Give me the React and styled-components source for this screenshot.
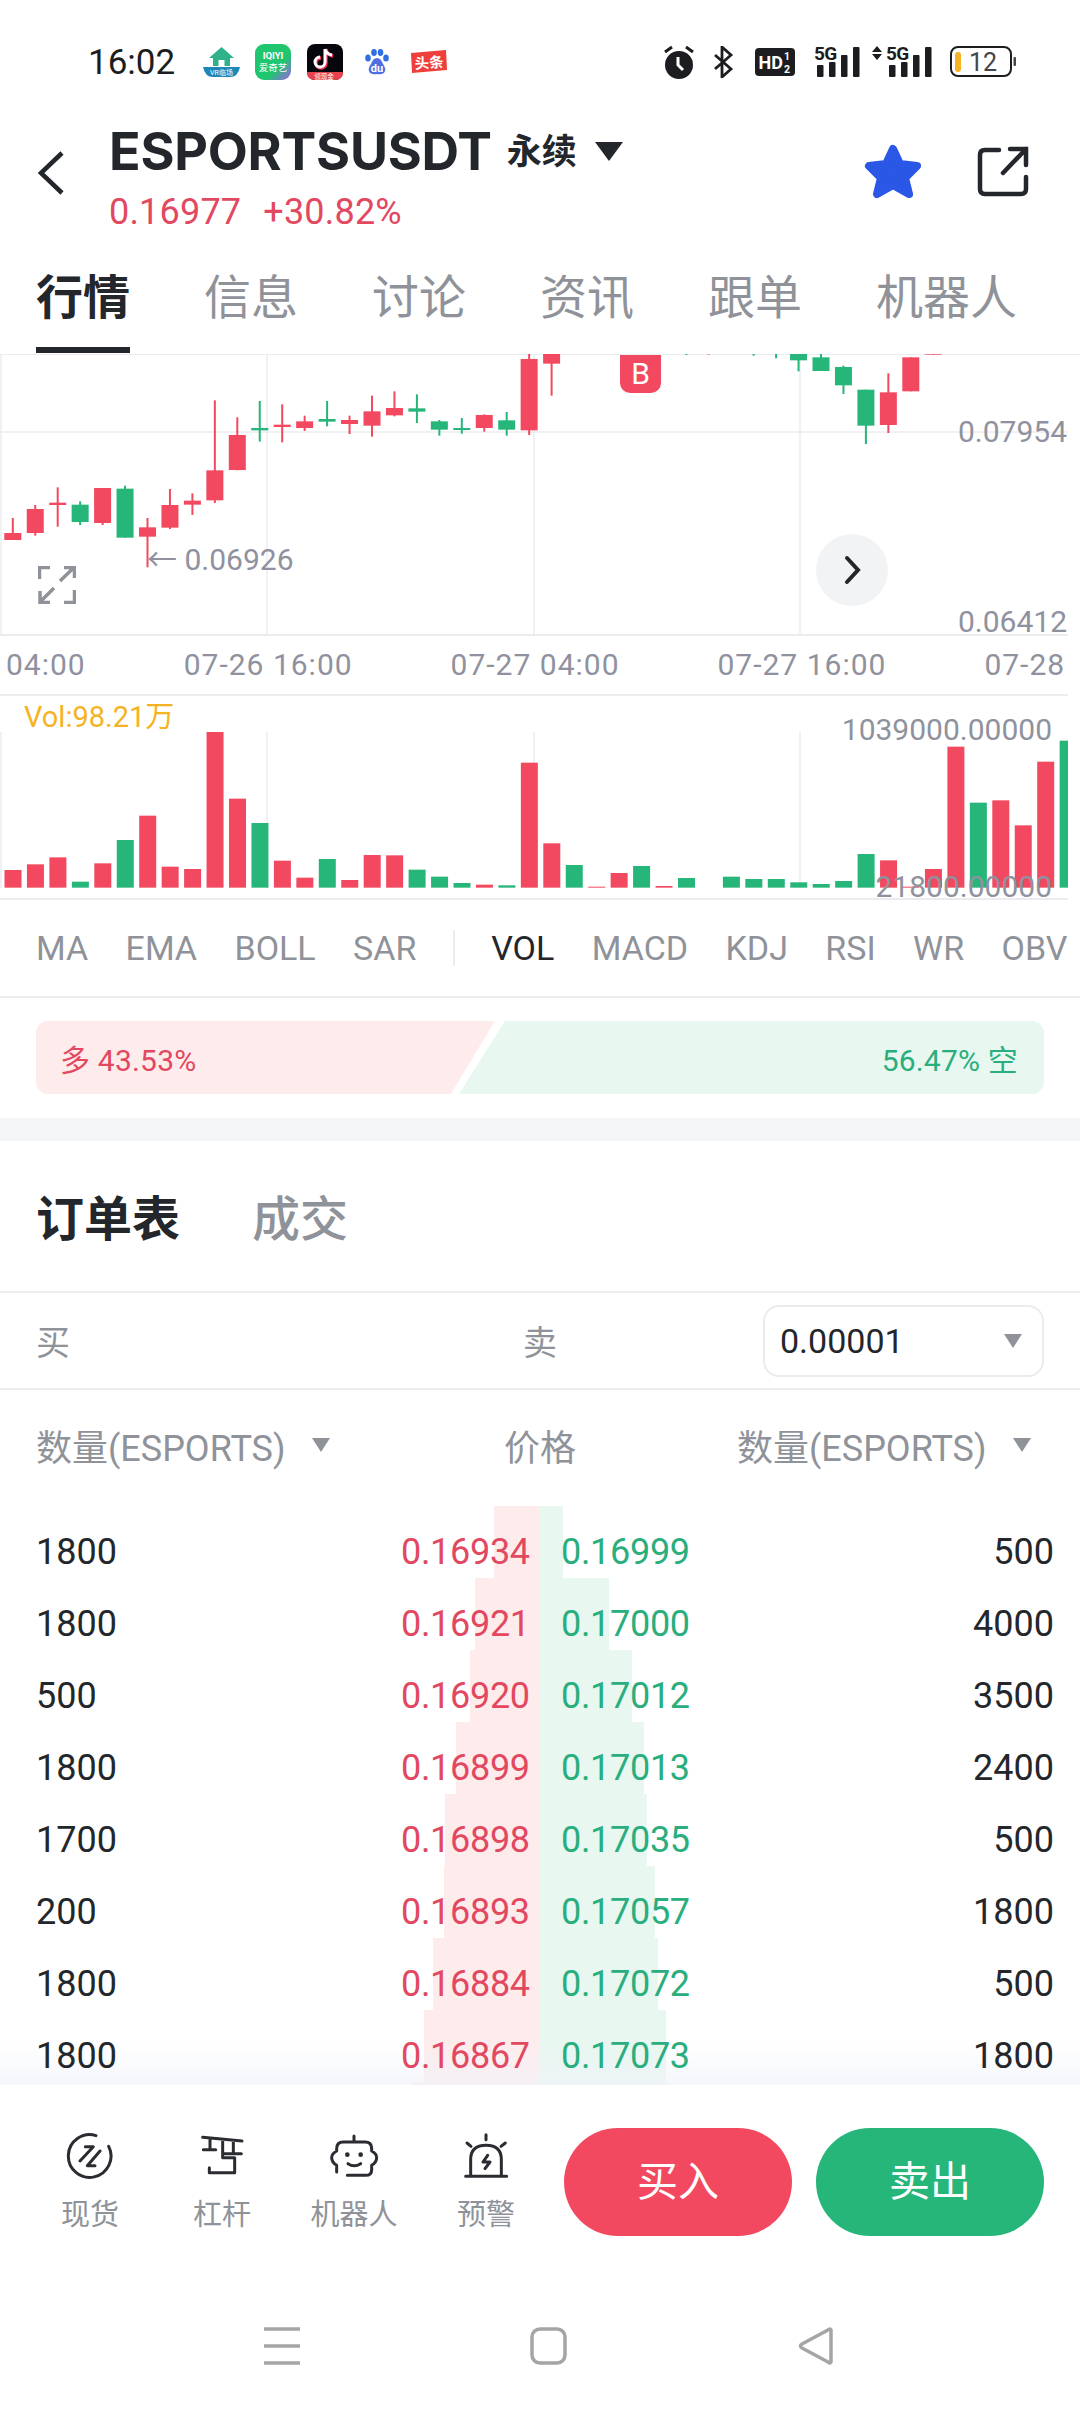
import React from 'react';
import styled, { createGlobalStyle } from 'styled-components';

const RED = '#f34960';
const GREEN = '#26b67a';
const RED_TEXT = '#e2485f';
const GREEN_TEXT = '#2aae7d';
const DARK = '#23262b';
const GREY = '#8f9399';
const AXIS = '#8f929e';
const LINE = '#ebecef';

const GlobalStyle = createGlobalStyle`
  html, body {
    margin: 0;
    padding: 0;
    background: #fff;
  }
  body {
    font-family: Roboto, "Noto Sans CJK SC", sans-serif;
    color: ${DARK};
  }
`;

const Page = styled.div`
  width: 1080px;
  height: 2412px;
  overflow: hidden;
  background: #fff;
`;

/* status bar */
const StatusBar = styled.div`
  display: flex;
  align-items: center;
  height: 124px;
  padding: 0 64px 0 88px;
  box-sizing: border-box;
`;
const Clock = styled.span`
  font-size: 35px;
  width: 88px;
  color: #1c1d20;
`;
const StatusIcon = styled.svg`
  flex: none;
  display: block;
  margin-left: ${(p) => p.$ml || 0}px;
`;
const StatusRight = styled.div`
  display: flex;
  align-items: center;
  margin-left: auto;
`;

/* header */
const Header = styled.div`
  display: flex;
  align-items: flex-start;
  height: 126px;
  padding: 0 51px 0 37px;
  box-sizing: border-box;
`;
const HeaderIcon = styled.svg`
  flex: none;
  display: block;
  margin-top: ${(p) => p.$mt}px;
`;
const TitleBlock = styled.div`
  margin-left: 44px;
`;
const TitleRow = styled.div`
  display: flex;
  align-items: center;
  height: 54px;
`;
const Symbol = styled.span`
  font-family: Inter, sans-serif;
  font-size: 52px;
  font-weight: 700;
  letter-spacing: -0.2px;
  color: ${DARK};
`;
const Perp = styled.span`
  font-size: 35px;
  font-weight: 700;
  margin-left: 15px;
  margin-top: -6px;
  color: ${DARK};
`;
const PerpCaret = styled.i`
  width: 0;
  height: 0;
  margin: 0 0 0 18px;
  border-left: 14px solid transparent;
  border-right: 14px solid transparent;
  border-top: 19px solid ${DARK};
`;
const PriceRow = styled.div`
  display: flex;
  gap: 22px;
  margin-top: 14px;
  font-size: 36px;
  line-height: 40px;
  letter-spacing: 0.2px;
  color: ${RED_TEXT};
`;
const HeaderActions = styled.div`
  display: flex;
  align-items: flex-start;
  gap: 55px;
  margin-left: auto;
`;

/* tabs */
const TabBar = styled.div`
  display: flex;
  gap: 74px;
  height: 104px;
  padding-left: 36px;
  box-sizing: border-box;
`;
const Tab = styled.div`
  position: relative;
  height: 104px;
  line-height: 96px;
  font-size: 47px;
  font-weight: ${(p) => (p.$active ? 700 : 400)};
  color: ${(p) => (p.$active ? DARK : GREY)};
  ${(p) =>
    p.$active &&
    `&::after {
      content: '';
      position: absolute;
      left: 0;
      right: 0;
      bottom: 1px;
      height: 6px;
      background: ${DARK};
    }`}
`;

/* price chart */
const ChartPanel = styled.div`
  position: relative;
  width: 1068px;
  height: 342px;
  box-sizing: border-box;
  border-bottom: 2px solid ${LINE};
`;
const TopRule = styled.div`
  height: 1px;
  margin-bottom: -1px;
  background: ${LINE};
  position: relative;
`;
const PriceSvg = styled.svg`
  display: block;
  width: 1068px;
  height: 282px;
`;
const ChartLabel = styled.span`
  position: absolute;
  top: ${(p) => p.$top}px;
  ${(p) => (p.$left !== undefined ? `left: ${p.$left}px;` : 'right: 1px;')}
  font-size: 30px;
  line-height: 36px;
  color: ${AXIS};
  white-space: nowrap;
`;
const SignalBadge = styled.div`
  position: absolute;
  top: 1px;
  left: 620px;
  width: 41px;
  height: 38px;
  border-radius: 0 0 10px 10px;
  background: ${RED};
  color: #fff;
  font-size: 30px;
  line-height: 38px;
  text-align: center;
`;
const ExpandIcon = styled.svg`
  position: absolute;
  left: 38px;
  top: 212px;
`;
const NextButton = styled.div`
  position: absolute;
  left: 816px;
  top: 180px;
  width: 72px;
  height: 72px;
  border-radius: 50%;
  background: #f2f3f5;
  display: flex;
  align-items: center;
  justify-content: center;
`;
const TimeAxis = styled.div`
  display: flex;
  gap: 98px;
  height: 58px;
  padding-left: 6px;
  line-height: 58px;
  font-size: 30px;
  letter-spacing: 1px;
  color: ${AXIS};
  white-space: nowrap;
`;

/* volume */
const VolumePanel = styled.div`
  position: relative;
  width: 1068px;
  height: 204px;
  padding-top: 36px;
  box-sizing: border-box;
  border-bottom: 2px solid ${LINE};
`;
const VolumeSvg = styled.svg`
  display: block;
  width: 1068px;
  height: 156px;
`;
const VolLabel = styled.span`
  position: absolute;
  left: 24px;
  top: 3px;
  font-size: 29px;
  line-height: 36px;
  color: #f5b324;
`;
const VolAxis = styled(ChartLabel)`
  right: 16px;
`;

/* indicators */
const IndicatorBar = styled.div`
  display: flex;
  align-items: center;
  gap: 37.4px;
  height: 98px;
  padding-left: 36px;
  box-sizing: border-box;
  border-bottom: 2px solid ${LINE};
  font-size: 34px;
  color: ${GREY};
  white-space: nowrap;
`;
const Indicator = styled.span`
  color: ${(p) => (p.$active ? DARK : GREY)};
`;
const IndicatorDivider = styled.i`
  flex: none;
  width: 2px;
  height: 36px;
  margin: 0 -1px;
  background: ${LINE};
`;

/* long short ratio */
const RatioSection = styled.div`
  display: flex;
  height: 120px;
  padding: 23px 36px 0;
  box-sizing: border-box;
`;
const RatioSide = styled.div`
  display: flex;
  align-items: center;
  height: 73px;
  box-sizing: border-box;
  font-size: 30px;
  letter-spacing: 0.2px;
`;
const RatioLong = styled(RatioSide)`
  flex: 0 0 459px;
  padding-left: 24px;
  background: #feeced;
  color: ${RED_TEXT};
  border-radius: 12px 0 0 12px;
  clip-path: polygon(0 0, 100% 0, 415px 100%, 0 100%);
`;
const RatioShort = styled(RatioSide)`
  flex: 1;
  margin-left: -36px;
  justify-content: flex-end;
  padding-right: 26px;
  background: #e8f7f0;
  color: ${GREEN_TEXT};
  border-radius: 0 12px 12px 0;
  clip-path: polygon(46px 0, 100% 0, 100% 100%, 0 100%);
`;
const Band = styled.div`
  height: 23px;
  background: #f4f5f7;
`;

/* order book */
const BookTabs = styled.div`
  display: flex;
  align-items: center;
  gap: 72px;
  height: 152px;
  padding: 0 0 2px 36px;
  box-sizing: border-box;
  border-bottom: 2px solid ${LINE};
  font-size: 48px;
`;
const BookTab = styled.span`
  font-weight: ${(p) => (p.$active ? 700 : 500)};
  color: ${(p) => (p.$active ? DARK : GREY)};
`;
const SideRow = styled.div`
  display: flex;
  align-items: center;
  height: 97px;
  padding: 0 36px 0 36px;
  box-sizing: border-box;
  border-bottom: 2px solid ${LINE};
  font-size: 34px;
  color: ${GREY};
`;
const SideLabel = styled.span`
  width: 487px;
`;
const Select = styled.div`
  display: flex;
  align-items: center;
  justify-content: space-between;
  width: 281px;
  height: 72px;
  margin-left: auto;
  padding: 0 20px 0 15px;
  box-sizing: border-box;
  border: 2px solid #e9ebee;
  border-radius: 16px;
  font-size: 34px;
  color: ${DARK};
`;
const Caret = styled.i`
  flex: none;
  width: 0;
  height: 0;
  border-left: 9px solid transparent;
  border-right: 9px solid transparent;
  border-top: 14px solid ${GREY};
`;
const ColumnHead = styled.div`
  display: grid;
  grid-template-columns: 468px 233px 1fr;
  align-items: center;
  height: 116px;
  padding: 0 0 6px 36px;
  box-sizing: border-box;
  font-size: 36px;
  color: ${GREY};
`;
const ColumnLabel = styled.span`
  display: flex;
  align-items: center;
  gap: 26px;
`;
const BookList = styled.div`
  position: relative;
  height: 579px;
  overflow: hidden;
  &::after {
    content: '';
    position: absolute;
    left: 0;
    right: 0;
    bottom: 0;
    height: 44px;
    background: linear-gradient(rgba(244, 246, 250, 0), rgba(240, 243, 249, 0.7));
    z-index: 2;
  }
`;
const BookRow = styled.div`
  position: relative;
  display: grid;
  grid-template-columns: 365px 128px 32px 128px 1fr;
  height: 72px;
  padding: 24px 26px 0 36px;
  box-sizing: border-box;
  font-size: 36px;
  line-height: 44px;
  color: ${DARK};
`;
const BidDepth = styled.i`
  position: absolute;
  top: 0;
  bottom: 0;
  right: 540px;
  background: #feeced;
`;
const AskDepth = styled.i`
  position: absolute;
  top: 0;
  bottom: 0;
  left: 540px;
  background: #e8f7f0;
`;
const Cell = styled.span`
  position: relative;
  z-index: 3;
  letter-spacing: ${(p) => (p.$price ? '-0.3px' : '0')};
  text-align: ${(p) => p.$align || 'left'};
  color: ${(p) => p.$color || DARK};
  white-space: nowrap;
`;

/* bottom actions */
const ActionBar = styled.div`
  display: flex;
  height: 242px;
  padding: 43px 36px 0 24px;
  box-sizing: border-box;
`;
const NavItem = styled.div`
  display: flex;
  flex-direction: column;
  align-items: center;
  width: 132px;
  padding-top: 4px;
  font-size: 29px;
  color: ${GREY};
`;
const NavLabel = styled.span`
  margin-top: 15px;
  line-height: 36px;
`;
const TradeButton = styled.div`
  flex: none;
  width: 228px;
  height: 108px;
  margin-left: ${(p) => p.$ml}px;
  border-radius: 54px;
  background: ${(p) => p.$bg};
  color: #fff;
  font-size: 41px;
  line-height: 108px;
  text-align: center;
`;
const SystemNav = styled.div`
  display: flex;
  gap: 226px;
  padding-left: 262px;
`;

// [color, wickTop, bodyTop, bodyBottom, wickBottom] measured off the chart, price area
const CANDLES = {
  0: ['r', 537, 582, 603, 603], 1: ['r', 498, 510, 582, 590], 2: ['r', 445, 491, 498, 563],
  3: ['g', 487, 497, 549, 558], 4: ['r', 447, 447, 552, 558], 5: ['g', 440, 449, 596, 596],
  6: ['r', 537, 565, 593, 685], 7: ['r', 450, 498, 566, 570], 8: ['r', 463, 485, 497, 528],
  9: ['r', 184, 394, 484, 492], 10: ['r', 235, 288, 393, 394], 11: ['g', 186, 267, 274, 308],
  12: ['r', 196, 257, 264, 310], 13: ['r', 230, 247, 267, 276], 14: ['g', 186, 240, 248, 262],
  15: ['r', 230, 243, 255, 285], 16: ['r', 170, 217, 260, 293], 17: ['r', 157, 207, 229, 232],
  18: ['g', 166, 208, 218, 252], 19: ['g', 243, 247, 272, 290], 20: ['g', 237, 267, 273, 284],
  21: ['r', 226, 228, 267, 278], 22: ['g', 219, 244, 272, 290], 23: ['r', 40, 60, 274, 288],
  24: ['r', 40, 40, 74, 170], 30: ['g', 40, 40, 40, 48], 31: ['r', 40, 40, 40, 47],
  33: ['g', 40, 40, 40, 50], 34: ['g', 40, 40, 40, 58], 35: ['g', 40, 40, 64, 97],
  36: ['g', 40, 55, 96, 96], 37: ['g', 80, 84, 139, 165], 38: ['g', 152, 152, 260, 315],
  39: ['r', 103, 160, 258, 282], 40: ['r', 55, 55, 157, 157], 41: ['r', 40, 40, 47, 47],
};

// top of each volume bar, same measuring; 0 leaves the slot empty
const VOLUMES = [
  ['r', 540], ['r', 523], ['r', 502], ['g', 575], ['r', 520], ['g', 450], ['r', 377], ['r', 530],
  ['r', 537], ['r', 126], ['r', 326], ['g', 399], ['r', 512], ['r', 563], ['g', 507], ['r', 570],
  ['r', 495], ['r', 496], ['g', 539], ['g', 560], ['g', 579], ['r', 584], ['g', 586], ['r', 218],
  ['r', 460], ['g', 525], ['r', 590], ['r', 549], ['g', 528], ['r', 588], ['g', 564], ['g', 0],
  ['g', 560], ['g', 567], ['g', 567], ['g', 577], ['g', 582], ['g', 573], ['g', 492], ['r', 511],
  ['r', 590], ['r', 537], ['r', 170], ['g', 338], ['r', 331], ['r', 406], ['r', 215], ['g', 152],
];

const BOOK = [
  ['1800', '0.16934', '0.16999', '500', 46, 23],
  ['1800', '0.16921', '0.17000', '4000', 65, 69],
  ['500', '0.16920', '0.17012', '3500', 70, 92],
  ['1800', '0.16899', '0.17013', '2400', 84, 104],
  ['1700', '0.16898', '0.17035', '500', 95, 107],
  ['200', '0.16893', '0.17057', '1800', 96, 115],
  ['1800', '0.16884', '0.17072', '500', 107, 118],
  ['1800', '0.16867', '0.17073', '1800', 116, 126],
];

const candleColor = (c) => (c === 'r' ? RED : GREEN);
const GRID_X = [1, 267, 534, 800];

function PriceChart() {
  const toY = (z) => 340 + z / 3;
  return (
    <PriceSvg viewBox="0 355 1068 282">
      {GRID_X.map((x) => (
        <line key={x} x1={x} x2={x} y1="355" y2="635" stroke={LINE} strokeWidth="1.5" />
      ))}
      <line x1="0" x2="1068" y1="433" y2="433" stroke={LINE} strokeWidth="1.5" />
      <line x1="0" x2="1068" y1="636" y2="636" stroke={LINE} strokeWidth="2" />
      {Object.entries(CANDLES).map(([i, [c, wt, bt, bb, wb]]) => {
        const cx = 12.8 + 22.45 * Number(i);
        return (
          <g key={i} fill={candleColor(c)}>
            <rect x={cx - 1} y={toY(wt)} width="2" height={(wb - wt) / 3} />
            <rect x={cx - 8.5} y={toY(bt)} width="17" height={(bb - bt) / 3} />
          </g>
        );
      })}
    </PriceSvg>
  );
}

function VolumeChart() {
  return (
    <VolumeSvg viewBox="0 732 1068 156">
      {GRID_X.map((x) => (
        <line key={x} x1={x} x2={x} y1="732" y2="888" stroke={LINE} strokeWidth="1.5" />
      ))}
      {VOLUMES.map(([c, top], i) =>
        top === 0 ? null : (
          <rect
            key={i}
            x={4.5 + 22.45 * i}
            y={690 + top / 3}
            width="17"
            height={(593 - top) / 3}
            fill={candleColor(c)}
          />
        ),
      )}
    </VolumeSvg>
  );
}

function AppIcons() {
  return (
    <>
      <StatusIcon $ml="27" width="37" height="32" viewBox="0 0 37 32">
        <path d="M18.5 1 L31 12 H27 V20 H10 V12 H6 Z" fill="#2fb28a" />
        <rect x="15.5" y="14" width="6" height="6" fill="#fff" />
        <path d="M0 21 H37 Q35 31 27 31 H10 Q2 31 0 21 Z" fill="#1f86b8" />
        <text x="18.5" y="29" fontSize="7" fill="#fff" textAnchor="middle">VR临场</text>
      </StatusIcon>
      <StatusIcon $ml="15" width="36" height="36" viewBox="0 0 36 36">
        <defs>
          <linearGradient id="iq" x1="0.2" y1="0.2" x2="1" y2="1">
            <stop offset="0.55" stopColor="#1fc66f" />
            <stop offset="1" stopColor="#a35cf0" />
          </linearGradient>
        </defs>
        <rect width="36" height="36" rx="9" fill="url(#iq)" />
        <text x="18" y="15" fontSize="9.5" fontWeight="700" fill="#fff" textAnchor="middle">IQIYI</text>
        <text x="18" y="27" fontSize="9.5" fill="#fff" textAnchor="middle">爱奇艺</text>
      </StatusIcon>
      <StatusIcon $ml="16" width="36" height="36" viewBox="0 0 36 36">
        <rect width="36" height="36" rx="8" fill="#06070c" />
        <path d="M0 28 H36 V28 Q36 36 28 36 H8 Q0 36 0 28 Z" fill="#e8424f" />
        <text x="17" y="34.5" fontSize="6.5" fill="#fff" textAnchor="middle">领现金</text>
        <path d="M19 5 V19 A5 5 0 1 1 14 14 M19 5 Q20 11 26 12" fill="none" stroke="#ff2f5d" strokeWidth="3.4" />
        <path d="M18 5 V18 A5 5 0 1 1 13 13 M18 5 Q19 10 25 11" fill="none" stroke="#fff" strokeWidth="3" />
      </StatusIcon>
      <StatusIcon $ml="22" width="24" height="26" viewBox="0 0 24 26">
        <g fill="#2f6fe4">
          <ellipse cx="3" cy="9" rx="2.8" ry="3.6" />
          <ellipse cx="9" cy="3.5" rx="2.8" ry="3.4" />
          <ellipse cx="15.5" cy="3.5" rx="2.8" ry="3.4" />
          <ellipse cx="21" cy="9" rx="2.8" ry="3.6" />
        </g>
        <path d="M12 9 Q16 9 18 15 Q22 20 19 24 Q16 26 12 25 Q8 26 5 24 Q2 20 6 15 Q8 9 12 9 Z" fill="#4f6fe0" />
        <text x="12" y="23" fontSize="11" fontWeight="700" fill="#fff" textAnchor="middle">du</text>
      </StatusIcon>
      <StatusIcon $ml="22" width="36" height="24" viewBox="0 0 36 24">
        <path d="M0 3 L35 0 L36 20 L1 23 Z" fill="#ee3f3c" />
        <text x="18" y="18" fontSize="14.5" fontWeight="700" fill="#fff" textAnchor="middle" transform="rotate(-4 18 12)">头条</text>
      </StatusIcon>
    </>
  );
}

function SignalIcon({ arrows, ml }) {
  const offset = arrows ? 14 : 0;
  return (
    <StatusIcon $ml={ml} width={offset + 46} height="40" viewBox={`0 -3 ${offset + 46} 40`}>
      {arrows && <path d="M5 1 L10 7 H0 Z M0 9 H10 L5 15 Z" fill="#1c1d20" />}
      <text x={offset} y="15" fontSize="19" fontWeight="700" letterSpacing="-0.6" fill="#1c1d20">5G</text>
      {[[3, 20], [15, 17], [27, 10], [39, 2]].map(([x, y]) => (
        <rect key={x} x={offset + x} y={y} width="6.5" height={32 - y} rx="1" fill="#1c1d20" />
      ))}
    </StatusIcon>
  );
}

function StatusIcons() {
  return (
    <StatusRight>
      <StatusIcon width="32" height="34" viewBox="0 0 32 34">
        <circle cx="16" cy="20" r="14" fill="#1c1d20" />
        <path d="M15 12 V20 L20 25" fill="none" stroke="#fff" strokeWidth="3" />
        <path d="M2 7 L9 2 M30 7 L23 2" stroke="#1c1d20" strokeWidth="3" />
      </StatusIcon>
      <StatusIcon $ml="18" width="21" height="32" viewBox="0 0 21 32">
        <path d="M2 9 L18 23 L9 31 V1 L18 9 L2 23" fill="none" stroke="#1c1d20" strokeWidth="2.8" />
      </StatusIcon>
      <StatusIcon $ml="21" width="40" height="28" viewBox="0 0 40 28">
        <rect width="40" height="28" rx="4" fill="#1c1d20" />
        <text x="3.5" y="21" fontSize="18" fontWeight="700" fill="#fff">HD</text>
        <text x="29" y="12" fontSize="10.5" fontWeight="700" fill="#fff">1</text>
        <text x="29" y="25" fontSize="10.5" fontWeight="700" fill="#fff">2</text>
      </StatusIcon>
      <SignalIcon ml="19" />
      <SignalIcon arrows ml="12" />
      <StatusIcon $ml="18" width="66" height="32" viewBox="0 0 66 32">
        <rect x="1" y="1" width="60" height="29" rx="7" fill="none" stroke="#1c1d20" strokeWidth="2" />
        <rect x="5" y="6" width="6" height="20" rx="3" fill="#f5b324" />
        <text x="19" y="25" fontSize="25" fill="#44464a">12</text>
        <rect x="63.5" y="11" width="2.5" height="9" rx="1" fill="#44464a" />
      </StatusIcon>
    </StatusRight>
  );
}

const stroke = { fill: 'none', stroke: '#2a2c31', strokeWidth: 9, strokeLinecap: 'round', strokeLinejoin: 'round' };

const NAV_ITEMS = [
  {
    label: '现货',
    box: '75 35 150 150',
    d: 'M168 46 A64 64 0 1 0 206 78 M136 79 H160 L120 122 M180 92 L142 136 H165',
  },
  {
    label: '杠杆',
    box: '471 35 150 150',
    d: 'M488 51 L606 62 M510 55 V88 M490 88 H527 M580 62 V100 M552 100 H604 M548 58 V112 H584 V157 H508 V142',
  },
  {
    label: '机器人',
    box: '865 35 150 150',
    d: 'M940 47 V63 M920 165 H975 Q993 165 993 148 V135 Q1008 125 1008 112 Q1008 100 993 92 V85 Q993 65 973 65 H908 Q888 65 888 85 V92 Q873 100 873 112 Q873 125 888 135 V155 M922 130 Q940 143 960 130',
    dots: [[920, 103], [960, 103]],
  },
  {
    label: '预警',
    box: '1263 35 150 150',
    d: 'M1292 165 V118 Q1292 75 1338 75 Q1384 75 1384 118 V165 M1277 168 H1400 M1338 43 V58 M1281 68 L1293 78 M1396 68 L1383 78 M1343 105 L1329 125 H1350 L1335 145',
  },
];

function App() {
  return (
    <Page>
      <GlobalStyle />
      <StatusBar>
        <Clock>16:02</Clock>
        <AppIcons />
        <StatusIcons />
      </StatusBar>

      <Header>
        <HeaderIcon $mt="26" width="28" height="46" viewBox="0 0 28 46">
          <path d="M25 3 L4 23 L25 43" fill="none" stroke={DARK} strokeWidth="4.5" />
        </HeaderIcon>
        <TitleBlock>
          <TitleRow>
            <Symbol>ESPORTSUSDT</Symbol>
            <Perp>永续</Perp>
            <PerpCaret />
          </TitleRow>
          <PriceRow>
            <span>0.16977</span>
            <span>+30.82%</span>
          </PriceRow>
        </TitleBlock>
        <HeaderActions>
          <HeaderIcon $mt="20" width="58" height="55" viewBox="0 0 58 55">
            <path
              d="M29 5 L36 20 L53 22 L41 34 L45 50 L29 41 L13 50 L17 34 L5 22 L22 20 Z"
              fill="#2a57e6"
              stroke="#2a57e6"
              strokeWidth="8"
              strokeLinejoin="round"
            />
          </HeaderIcon>
          <HeaderIcon $mt="22" width="52" height="52" viewBox="0 0 52 52">
            <path
              d="M22 4 H8 Q3 4 3 9 V43 Q3 48 8 48 H44 Q49 48 49 43 V31 M26 27 L49 3 M33 3 H49 V19"
              fill="none"
              stroke={DARK}
              strokeWidth="4.5"
              strokeLinecap="round"
            />
          </HeaderIcon>
        </HeaderActions>
      </Header>

      <TabBar>
        <Tab $active>行情</Tab>
        <Tab>信息</Tab>
        <Tab>讨论</Tab>
        <Tab>资讯</Tab>
        <Tab>跟单</Tab>
        <Tab>机器人</Tab>
      </TabBar>

      <TopRule />
      <ChartPanel>
        <PriceChart />
        <SignalBadge>B</SignalBadge>
        <ChartLabel $top="60">0.07954</ChartLabel>
        <ChartLabel $top="250">0.06412</ChartLabel>
        <ChartLabel $left="147" $top="188">← 0.06926</ChartLabel>
        <ExpandIcon width="38" height="38" viewBox="0 0 38 38">
          <path
            d="M1.5 13 V1.5 H12 M22 15 L36 1.5 M26 1.5 H36.5 V12 M16 22 L2 36 M2 25 V36.5 H12 M36.5 24 V36.5 H26"
            fill="none"
            stroke={GREY}
            strokeWidth="3.5"
          />
        </ExpandIcon>
        <NextButton>
          <svg width="20" height="30" viewBox="0 0 20 30">
            <path d="M5 3 L16 15 L5 27" fill="none" stroke={DARK} strokeWidth="4" strokeLinecap="round" />
          </svg>
        </NextButton>
        <TimeAxis>
          <span>04:00</span>
          <span>07-26 16:00</span>
          <span>07-27 04:00</span>
          <span>07-27 16:00</span>
          <span>07-28</span>
        </TimeAxis>
      </ChartPanel>

      <VolumePanel>
        <VolLabel>Vol:98.21万</VolLabel>
        <VolumeChart />
        <VolAxis $top="16">1039000.00000</VolAxis>
        <VolAxis $top="173">21800.00000</VolAxis>
      </VolumePanel>

      <IndicatorBar>
        <Indicator>MA</Indicator>
        <Indicator>EMA</Indicator>
        <Indicator>BOLL</Indicator>
        <Indicator>SAR</Indicator>
        <IndicatorDivider />
        <Indicator $active>VOL</Indicator>
        <Indicator>MACD</Indicator>
        <Indicator>KDJ</Indicator>
        <Indicator>RSI</Indicator>
        <Indicator>WR</Indicator>
        <Indicator>OBV</Indicator>
      </IndicatorBar>

      <RatioSection>
        <RatioLong>多 43.53%</RatioLong>
        <RatioShort>56.47% 空</RatioShort>
      </RatioSection>
      <Band />

      <BookTabs>
        <BookTab $active>订单表</BookTab>
        <BookTab>成交</BookTab>
      </BookTabs>
      <SideRow>
        <SideLabel>买</SideLabel>
        <span>卖</span>
        <Select>
          0.00001
          <Caret />
        </Select>
      </SideRow>
      <ColumnHead>
        <ColumnLabel>
          数量(ESPORTS)
          <Caret />
        </ColumnLabel>
        <span>价格</span>
        <ColumnLabel>
          数量(ESPORTS)
          <Caret />
        </ColumnLabel>
      </ColumnHead>
      <BookList>
        {BOOK.map(([bidQty, bid, ask, askQty, bidW, askW], i) => (
          <BookRow key={i}>
            <BidDepth style={{ width: bidW }} />
            <AskDepth style={{ width: askW }} />
            <Cell>{bidQty}</Cell>
            <Cell $price $align="right" $color={RED_TEXT}>{bid}</Cell>
            <span />
            <Cell $price $color={GREEN_TEXT}>{ask}</Cell>
            <Cell $align="right">{askQty}</Cell>
          </BookRow>
        ))}
        <BookRow>
          <BidDepth style={{ width: 128 }} />
          <AskDepth style={{ width: 128 }} />
        </BookRow>
      </BookList>

      <ActionBar>
        {NAV_ITEMS.map((item) => (
          <NavItem key={item.label}>
            <svg width="50" height="50" viewBox={item.box}>
              <path d={item.d} {...stroke} />
              {item.dots && item.dots.map(([x, y]) => <circle key={x} cx={x} cy={y} r="7" fill="#2a2c31" />)}
            </svg>
            <NavLabel>{item.label}</NavLabel>
          </NavItem>
        ))}
        <TradeButton $ml="12" $bg={RED}>买入</TradeButton>
        <TradeButton $ml="24" $bg={GREEN}>卖出</TradeButton>
      </ActionBar>

      <SystemNav>
        <svg width="40" height="38" viewBox="0 0 40 38">
          <path d="M2 2 H38 M2 19 H38 M2 36 H38" stroke="#a5a5a5" strokeWidth="3.5" />
        </svg>
        <svg width="40" height="38" viewBox="0 0 40 38">
          <rect x="4" y="2" width="33" height="34" rx="8" fill="none" stroke="#a5a5a5" strokeWidth="3.5" />
        </svg>
        <svg width="40" height="38" viewBox="0 0 40 38">
          <path d="M37 3 V35 Q36 37 34 35 L8 21 Q5 19 8 17 L34 3 Q36 1 37 3 Z" fill="none" stroke="#a5a5a5" strokeWidth="3.5" strokeLinejoin="round" />
        </svg>
      </SystemNav>
    </Page>
  );
}

export default App;
